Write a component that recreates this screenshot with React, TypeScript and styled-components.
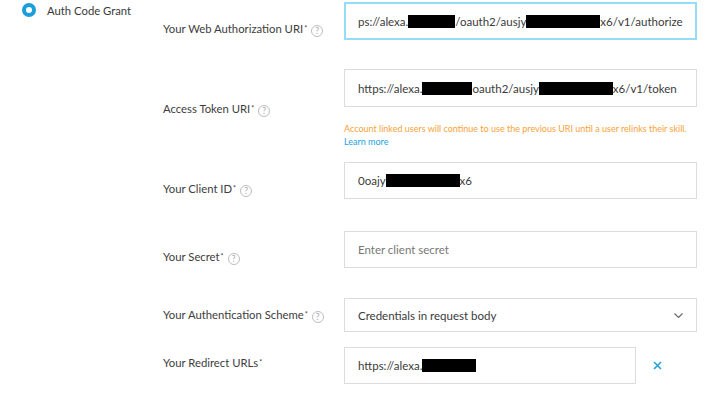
import React from "react";
import styled, { createGlobalStyle } from "styled-components";

const Global = createGlobalStyle`
  html, body { margin: 0; padding: 0; background: #fff; }
  body { font-family: Lato, "Open Sans", sans-serif; color: #333; }
`;

const Page = styled.div`
  display: flex;
  width: 720px;
  height: 397px;
  overflow: hidden;
`;

const OptionColumn = styled.div`
  width: 163px;
  flex: none;
`;

const RadioOption = styled.label`
  display: flex;
  align-items: center;
  gap: 11px;
  padding: 2px 0 0 22px;
  height: 16px;
  font-size: 11.3px;
  color: #3a3a3a;
`;

const RadioDot = styled.span`
  width: 14px;
  height: 14px;
  border-radius: 50%;
  background: #1b9ed9;
  display: flex;
  align-items: center;
  justify-content: center;
  &::after {
    content: "";
    width: 6px;
    height: 6px;
    border-radius: 50%;
    background: #fff;
  }
`;

const Form = styled.div`
  display: flex;
  flex-direction: column;
  padding-top: 2px;
`;

const Row = styled.div<{ $after: number }>`
  display: flex;
  align-items: flex-start;
  margin-bottom: ${(p) => p.$after}px;
`;

const Label = styled.div<{ $top: number }>`
  width: 181px;
  flex: none;
  padding-top: ${(p) => p.$top}px;
  font-size: 11.3px;
  line-height: 16px;
  color: #3d3d3d;
  display: flex;
  align-items: center;
`;

const Req = styled.sup`
  font-size: 7px;
  line-height: 0;
  position: relative;
  top: -1px;
  margin-left: 1px;
`;

const Help = styled.span`
  box-sizing: border-box;
  width: 12px;
  height: 12px;
  border: 1px solid #bdbdbd;
  border-radius: 50%;
  color: #a8a8a8;
  font-size: 8.5px;
  line-height: 10px;
  text-align: center;
  margin-left: 4px;
  margin-top: 3px;
`;

const FieldCol = styled.div`
  display: flex;
  flex-direction: column;
`;

const Field = styled.div<{ $w?: number; $h?: number; $focus?: boolean; $muted?: boolean }>`
  box-sizing: border-box;
  width: ${(p) => p.$w ?? 353}px;
  height: ${(p) => p.$h ?? 38}px;
  border: ${(p) => (p.$focus ? "2px solid #96dcf6" : "1px solid #dcdcdc")};
  padding: 0 ${(p) => (p.$focus ? 12 : 13)}px;
  display: flex;
  align-items: center;
  font-size: 11.5px;
  color: ${(p) => (p.$muted ? "#777" : "#3a3a3a")};
  white-space: nowrap;
  overflow: hidden;
`;

const Redact = styled.span<{ $w: number }>`
  display: inline-block;
  width: ${(p) => p.$w}px;
  height: 13px;
  background: #000;
  flex: none;
`;

const Chevron = styled.svg`
  margin-left: auto;
  margin-right: 0;
`;

const Note = styled.div`
  margin-top: 15px;
  font-size: 9px;
  line-height: 13px;
  color: #f7a23a;
`;

const Link = styled.a`
  color: #22a3dc;
  text-decoration: none;
  display: block;
`;

const RemoveBtn = styled.span`
  margin-left: 17px;
  align-self: center;
  display: flex;
`;

export default function App() {
  return (
    <>
      <Global />
      <Page>
        <OptionColumn>
          <RadioOption>
            <RadioDot />
            Auth Code Grant
          </RadioOption>
        </OptionColumn>
        <Form>
          <Row $after={29}>
            <Label $top={19}>
              Your Web Authorization URI<Req>*</Req>
              <Help>?</Help>
            </Label>
            <Field $focus>
              ps://alexa.<Redact $w={47} />/oauth2/ausjy<Redact $w={74} />x6/v1/authorize
            </Field>
          </Row>
          <Row $after={14}>
            <Label $top={32}>
              Access Token URI<Req>*</Req>
              <Help>?</Help>
            </Label>
            <FieldCol>
              <Field>
                https://alexa.<Redact $w={50} />oauth2/ausjy<Redact $w={74} />x6/v1/token
              </Field>
              <Note>
                Account linked users will continue to use the previous URI until a user relinks their skill.
                <Link href="#">Learn more</Link>
              </Note>
            </FieldCol>
          </Row>
          <Row $after={32}>
            <Label $top={19}>
              Your Client ID<Req>*</Req>
              <Help>?</Help>
            </Label>
            <Field $h={37}>
              0oajy<Redact $w={74} />x6
            </Field>
          </Row>
          <Row $after={30}>
            <Label $top={18}>
              Your Secret<Req>*</Req>
              <Help>?</Help>
            </Label>
            <Field $h={37} $muted>
              Enter client secret
            </Field>
          </Row>
          <Row $after={15}>
            <Label $top={9}>
              Your Authentication Scheme<Req>*</Req>
              <Help>?</Help>
            </Label>
            <Field $h={34}>
              Credentials in request body
              <Chevron width="9" height="5" viewBox="0 0 9 5">
                <path d="M0.5 0.5l4 4 4-4" fill="none" stroke="#666" strokeWidth="1.1" />
              </Chevron>
            </Field>
          </Row>
          <Row $after={0}>
            <Label $top={8}>
              Your Redirect URLs<Req>*</Req>
            </Label>
            <Field $w={292} $h={37}>
              https://alexa.<Redact $w={54} />
            </Field>
            <RemoveBtn>
              <svg width="9" height="9" viewBox="0 0 9 9">
                <path d="M1 1l7 7M8 1l-7 7" stroke="#22a3dc" strokeWidth="1.6" />
              </svg>
            </RemoveBtn>
          </Row>
        </Form>
      </Page>
    </>
  );
}
